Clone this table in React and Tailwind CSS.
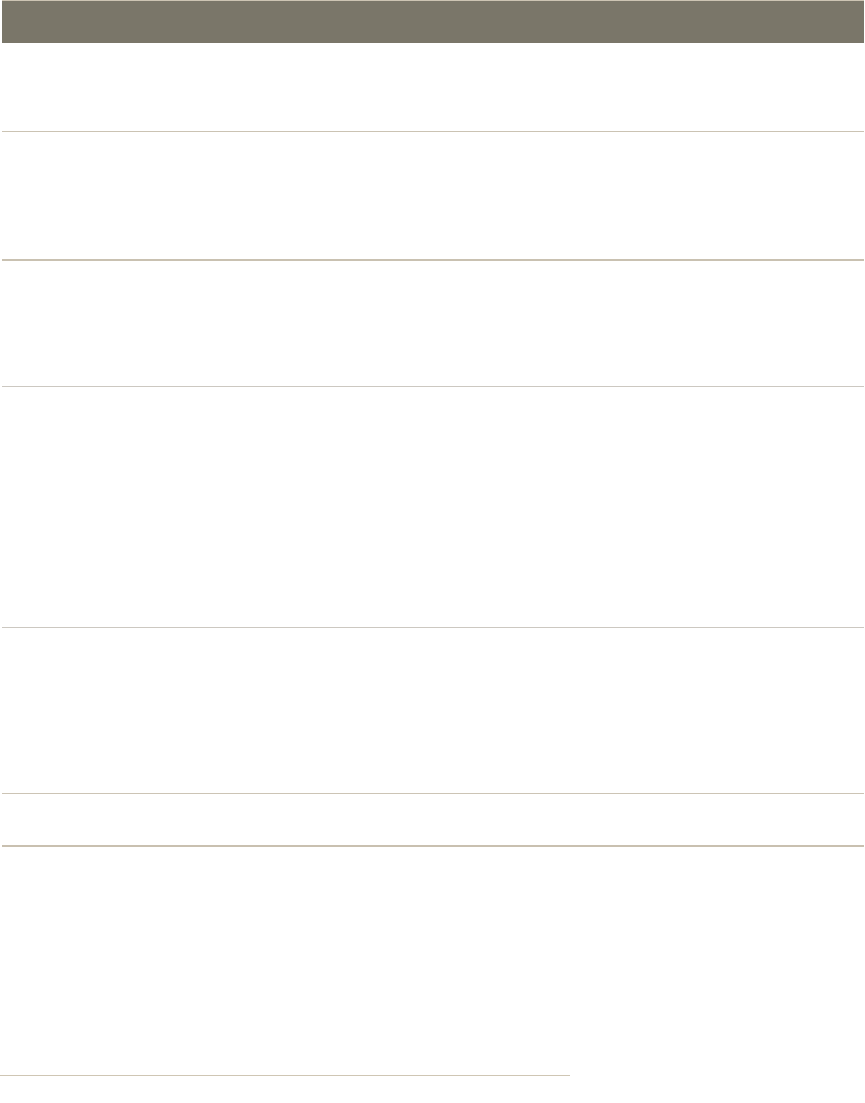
export default function App() {
  return (
    <div className="min-h-[1103px] w-full bg-white" style={{ fontFamily: '"Liberation Sans", Arial, sans-serif' }}>
      <div className="ml-[2px] mr-[1px]">
        <div className="h-[43px] border-t border-[#cdc4b3] bg-[#7a7669]" />
        <div className="h-[89px] border-b border-[#cbc3b3]" />
        <div className="h-[129px] border-b-2 border-[#c9c1b1]" />
        <div className="h-[126px] border-b border-[#ccc8c1]" />
        <div className="h-[241px] border-b border-[#ccc8c1]" />
        <div className="h-[166px] border-b border-[#ccc4b5]" />
        <div className="h-[53px] border-b-2 border-[#c9c0b0]" />
      </div>
      <div className="h-[228px]" />
      <div className="h-px w-[570px] bg-[#cfc6b4]" />
    </div>
  );
}
